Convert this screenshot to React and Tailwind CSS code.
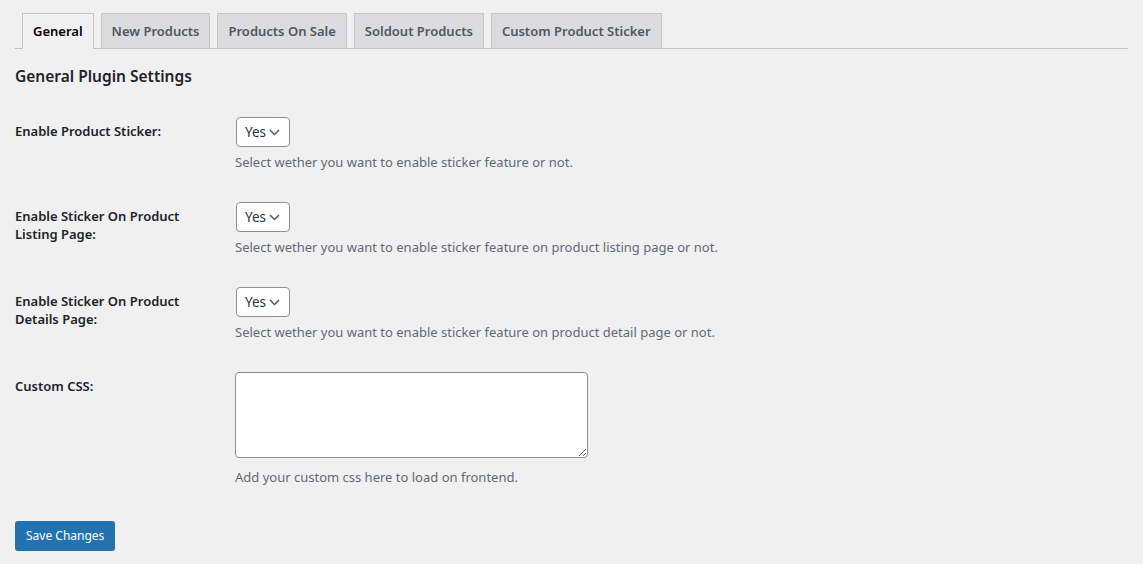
import React from "react";

const tabs = ["General", "New Products", "Products On Sale", "Soldout Products", "Custom Product Sticker"];

const rows = [
  {
    label: ["Enable Product Sticker:"],
    desc: "Select wether you want to enable sticker feature or not.",
  },
  {
    label: ["Enable Sticker On Product", "Listing Page:"],
    desc: "Select wether you want to enable sticker feature on product listing page or not.",
  },
  {
    label: ["Enable Sticker On Product", "Details Page:"],
    desc: "Select wether you want to enable sticker feature on product detail page or not.",
  },
];

const YesSelect = () => (
  <div className="ml-[1px] flex h-[30px] w-[54px] items-center justify-between rounded-[4px] border border-[#8c8f94] bg-white pl-[8px] pr-[9px] text-[13.5px] text-[#2c3338]">
    <span>Yes</span>
    <svg width="11" height="7" viewBox="0 0 11 7" fill="none">
      <path d="M1 1l4.5 4.5L10 1" stroke="#50575e" strokeWidth="1.5" />
    </svg>
  </div>
);

const App = () => {
  return (
    <div
      className="min-h-[564px] w-full bg-[#f0f0f1] px-[15px] pt-[13px] text-[#1d2327]"
      style={{ fontFamily: '"Noto Sans", "Open Sans", sans-serif' }}
    >
      {/* tabs */}
      <div className="flex border-b border-[#c3c4c7]">
        {tabs.map((t, i) => (
          <div
            key={t}
            className={
              i === 0
                ? "-mb-px ml-[7px] border border-b-0 border-[#c3c4c7] bg-[#f0f0f1] px-[10px] pb-[6px] pt-[5px] text-[13px] font-semibold leading-[24px] text-black"
                : "ml-[7px] border border-b-0 border-[#c3c4c7] bg-[#dcdcde] px-[10px] pb-[5px] pt-[5px] text-[13px] font-semibold leading-[24px] text-[#50575e]"
            }
          >
            {t}
          </div>
        ))}
      </div>

      <h2 className="mt-[16px] text-[15.5px] font-semibold leading-[22px]">General Plugin Settings</h2>

      <div className="mt-[15px]">
        {rows.map((r, i) => (
          <div key={i} className="flex h-[85px]">
            <div className="w-[220px] pt-[20px] text-[13px] font-semibold leading-[18px]">
              {r.label.map((l) => (
                <div key={l}>{l}</div>
              ))}
            </div>
            <div className="pt-[15px]">
              <YesSelect />
              <p className="mt-[5px] text-[13px] leading-[20px] text-[#646970]">{r.desc}</p>
            </div>
          </div>
        ))}

        <div className="flex h-[146px]">
          <div className="w-[220px] pt-[20px] text-[13px] font-semibold leading-[18px]">Custom CSS:</div>
          <div className="pt-[15px]">
            <textarea className="block h-[86px] w-[353px] resize rounded-[4px] border border-[#8c8f94] bg-white"></textarea>
            <p className="mt-[9px] text-[13px] leading-[20px] text-[#646970]">Add your custom css here to load on frontend.</p>
          </div>
        </div>
      </div>

      <button className="mt-[18px] h-[30px] rounded-[3px] bg-[#2271b1] px-[11px] text-[12px] text-white">
        Save Changes
      </button>
    </div>
  );
};

export default App;
